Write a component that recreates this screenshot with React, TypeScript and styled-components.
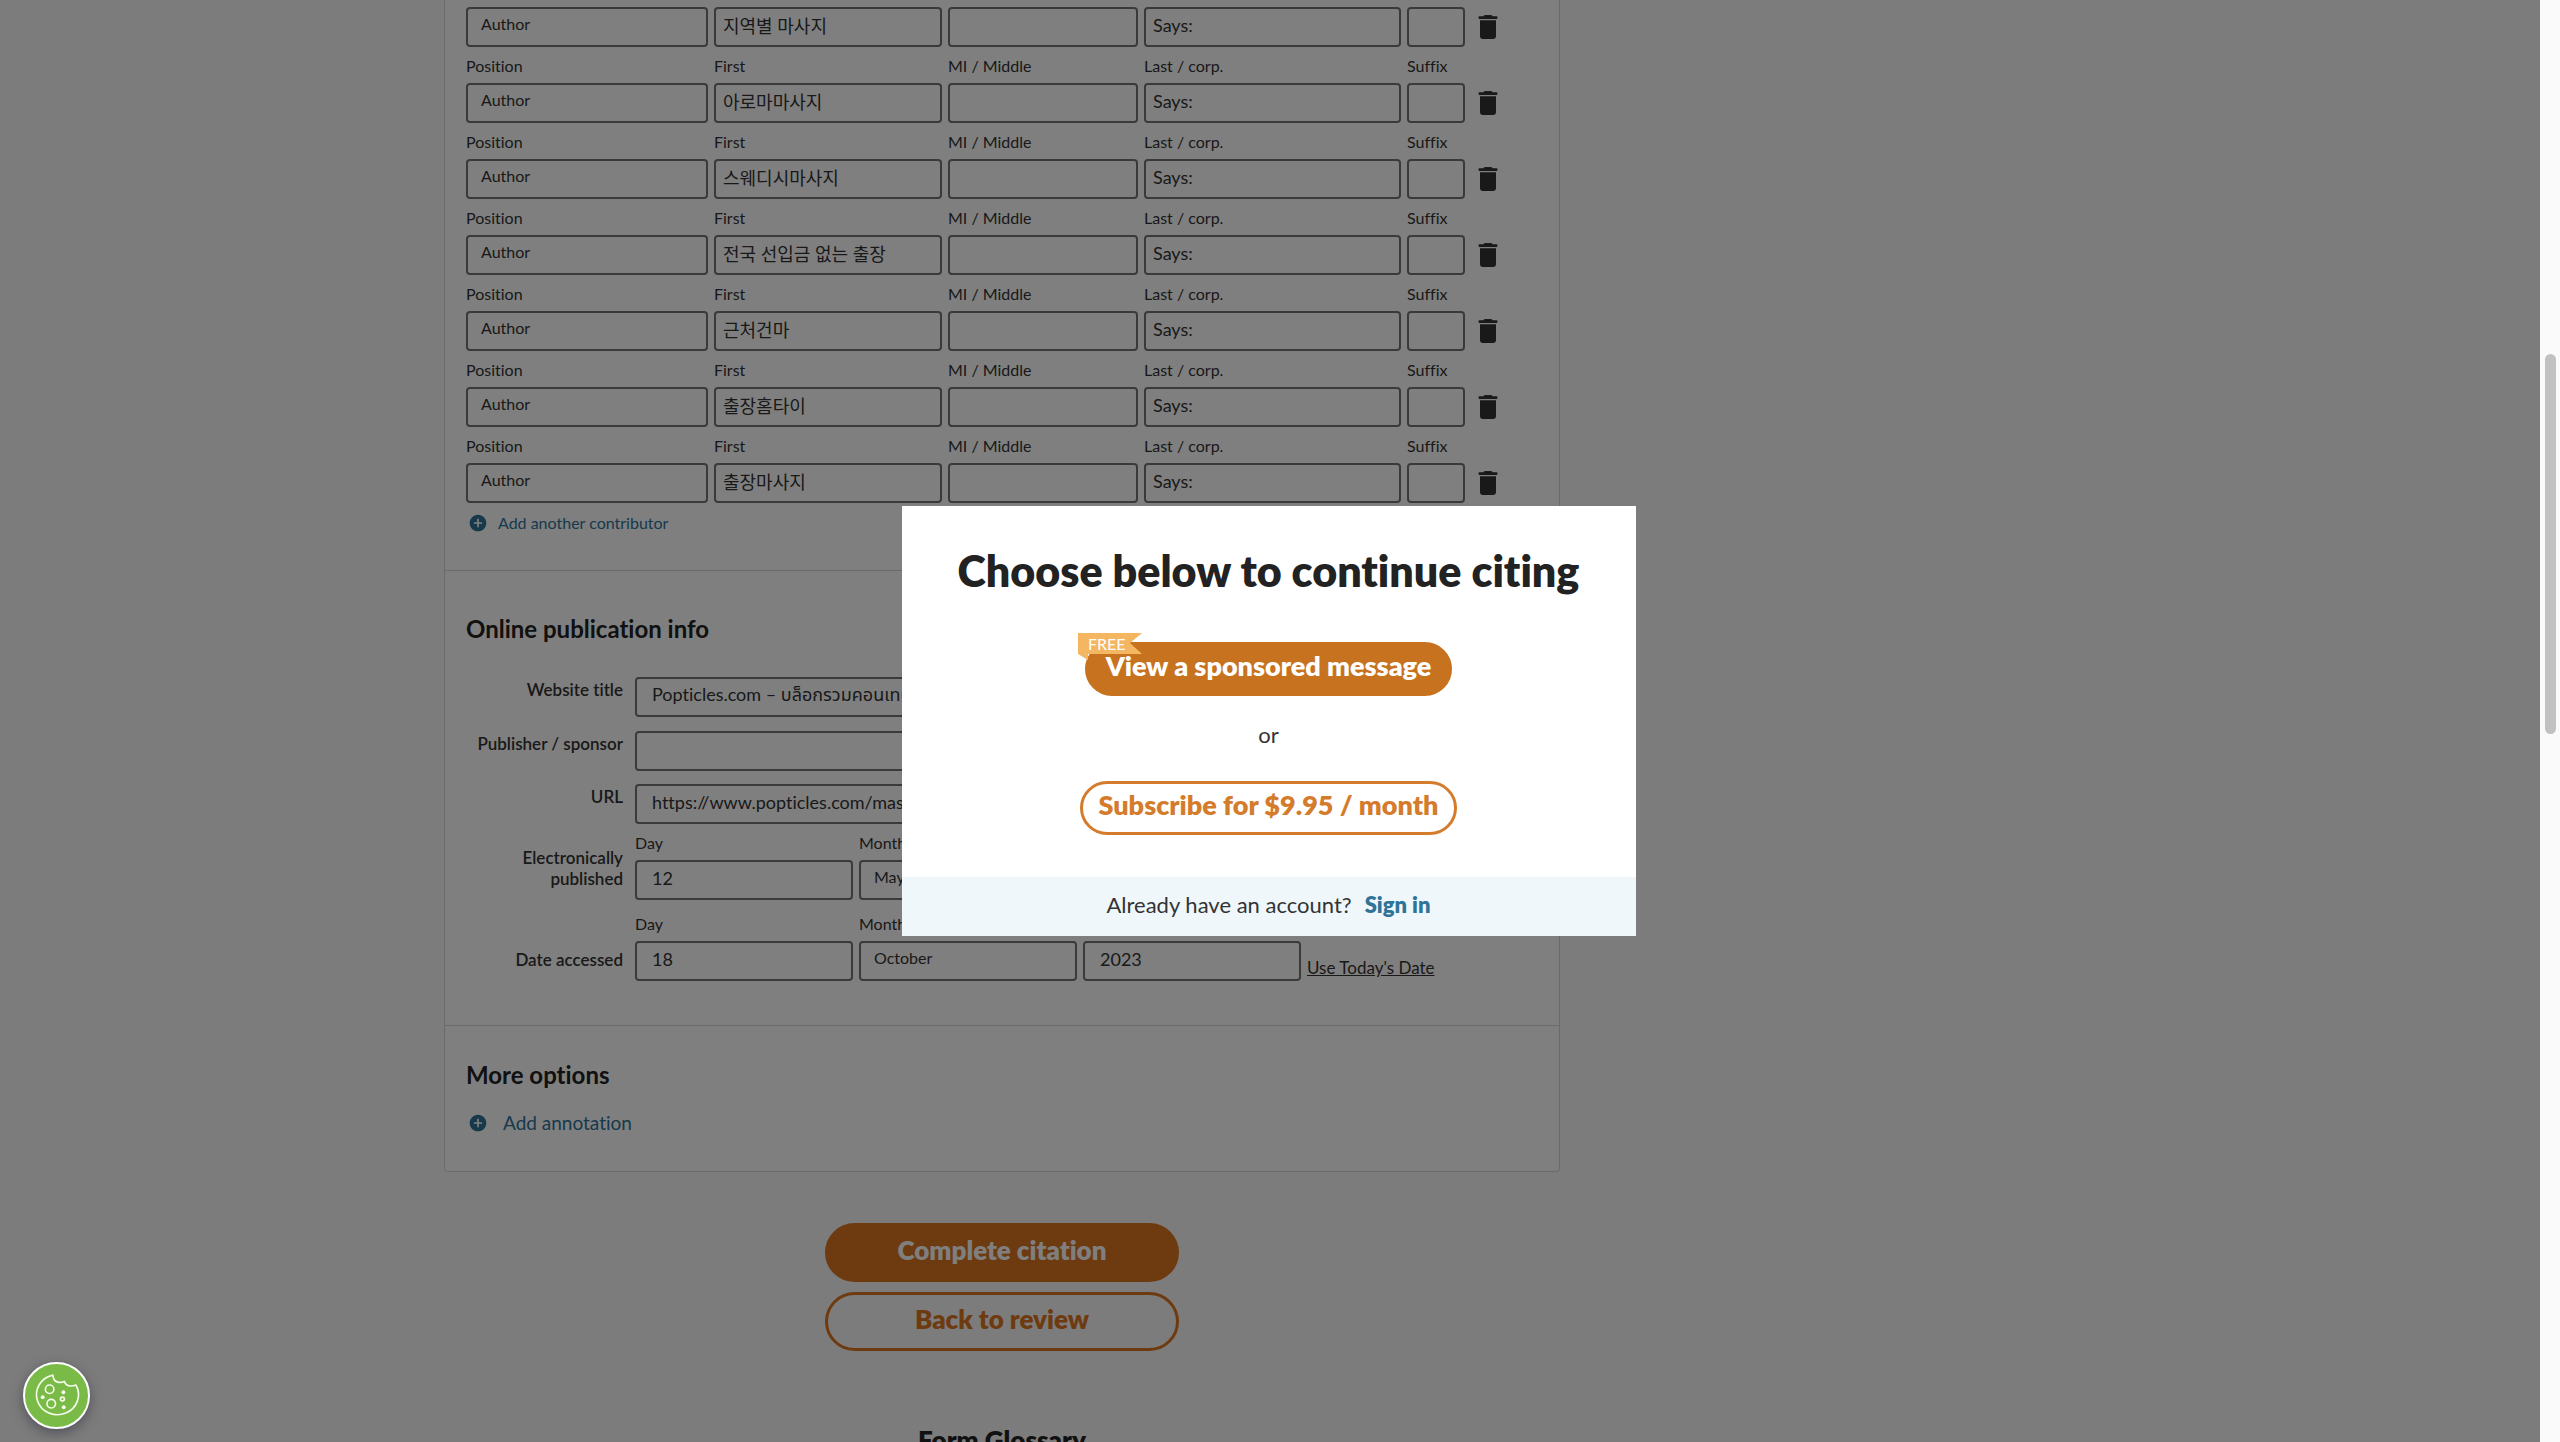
import React, { useId } from "react";
import styled, { createGlobalStyle, css } from "styled-components";
import { MdAddCircle, MdDelete } from "react-icons/md";

const font = `Lato, "Noto Sans CJK KR", "Noto Sans Thai", "Noto Sans", sans-serif`;

const color = {
  page: "#f9f9f9",
  card: "#ffffff",
  line: "#d6d6d6",
  field: "#757575",
  text: "#333333",
  heading: "#222222",
  link: "#2f7399",
  orange: "#dc7520",
  orangeDeep: "#c7721e",
  ribbon: "#f4b660",
};

const GlobalStyle = createGlobalStyle`
  *, *::before, *::after { box-sizing: border-box; }
  body {
    margin: 0;
    background: ${color.page};
    color: ${color.text};
    font-family: ${font};
    font-size: 16px;
    line-height: 20px;
    font-variant-ligatures: none;
  }
  button, input, select {
    font-family: inherit;
    font-variant-ligatures: none;
    color: inherit;
    margin: 0;
  }
`;

const Shell = styled.div`
  display: flex;
  height: 100vh;
  overflow: hidden;
`;

const Viewport = styled.div`
  position: relative;
  flex: 1;
  min-width: 0;
  overflow: hidden;
`;

const ScrollTrack = styled.div`
  flex: none;
  width: 20px;
  padding: 354px 4px 0 5px;
  background: #fafafa;
`;

const ScrollThumb = styled.div`
  height: 380px;
  border-radius: 6px;
  background: #c1c1c1;
`;

const Container = styled.div`
  display: grid;
  grid-template-columns: 1116fr 536fr;
  max-width: 1652px;
  margin: 0 auto;
`;

const Main = styled.main`
  display: flex;
  flex-direction: column;
  align-items: center;
`;

const Card = styled.form`
  width: 100%;
  background: ${color.card};
  border: 1px solid ${color.line};
  border-top: 0;
  border-radius: 0 0 4px 4px;
`;

const Section = styled.section<{ $top: number; $bottom: number }>`
  padding: ${(p) => p.$top}px 21px ${(p) => p.$bottom}px;
  & + & {
    border-top: 1px solid ${color.line};
  }
`;

const SectionTitle = styled.h2<{ $gap: number }>`
  margin: 0 0 ${(p) => p.$gap}px;
  color: ${color.heading};
  font-size: 24px;
  font-weight: 700;
  line-height: 32px;
`;

const ContributorRow = styled.div`
  display: grid;
  grid-template-columns: 242fr 228fr 190fr 257fr 58fr 67fr;
  align-items: end;
  gap: 6px;
`;

const FieldBox = styled.div`
  display: flex;
  flex-direction: column;
  min-width: 0;
`;

const FieldLabel = styled.label`
  padding: 9px 0 7px;
  font-size: 16px;
  line-height: 20px;
`;

const control = css`
  width: 100%;
  min-width: 0;
  height: 40px;
  border: 2px solid ${color.field};
  border-radius: 4px;
  background: transparent;
  outline: none;
`;

const TextInput = styled.input<{ $inset: number }>`
  ${control}
  padding: 0 8px 4px ${(p) => p.$inset}px;
  font-size: 18px;
`;

const SelectInput = styled.select`
  ${control}
  appearance: none;
  padding: 0 14px 8px 13px;
  font-size: 16px;
`;

const IconButton = styled.button`
  display: flex;
  justify-self: start;
  margin-bottom: 4px;
  padding: 0 0 0 1px;
  border: 0;
  background: none;
  color: ${color.text};
  font-size: 32px;
`;

const AddButton = styled.button<{ $size: number; $gap: number }>`
  display: flex;
  align-items: center;
  gap: ${(p) => p.$gap}px;
  padding: 0 0 0 2px;
  border: 0;
  background: none;
  color: ${color.link};
  font-size: ${(p) => p.$size}px;
  line-height: 24px;
  svg {
    width: 20px;
    height: 20px;
  }
`;

const AddRow = styled.div`
  padding-top: 8px;
`;

const FormGrid = styled.div`
  display: grid;
  grid-template-columns: 157fr 903fr;
  column-gap: 12px;
  text-align: right;
`;

const RowLabel = styled.label`
  padding-top: 2px;
  font-size: 17px;
  font-weight: 600;
  line-height: 21px;
`;

const GroupLabel = styled.span`
  align-self: end;
  padding: 0 0 11px 16px;
  font-size: 17px;
  font-weight: 600;
  line-height: 21px;
`;

const RowField = styled.div<{ $gap: number }>`
  margin-bottom: ${(p) => p.$gap}px;
`;

const DateRow = styled.div<{ $top: number }>`
  display: grid;
  grid-template-columns: 218fr 218fr 218fr 231fr;
  gap: 6px;
  align-items: end;
  margin-top: ${(p) => p.$top}px;
  text-align: left;
`;

const TodayLink = styled.a`
  padding-bottom: 3px;
  color: inherit;
  font-size: 17px;
  line-height: 21px;
  text-decoration: underline;
`;

const pill = css`
  display: flex;
  align-items: center;
  justify-content: center;
  padding: 0 0 6px;
  border: 3px solid ${color.orange};
  border-radius: 30px;
  font-weight: 800;
  line-height: 32px;
  white-space: nowrap;
`;

const Actions = styled.div`
  display: flex;
  flex-direction: column;
  gap: 10px;
  width: 354px;
  margin: 51px 0 73px;
`;

const ActionButton = styled.button<{ $filled?: boolean }>`
  ${pill}
  height: 59px;
  font-size: 26px;
  background: ${(p) => (p.$filled ? color.orange : "transparent")};
  color: ${(p) => (p.$filled ? "#ffffff" : color.orange)};
`;

const GlossaryTitle = styled.h2`
  margin: 0;
  color: ${color.heading};
  font-size: 26px;
  font-weight: 800;
  line-height: 32px;
  white-space: nowrap;
`;

const Overlay = styled.div`
  position: absolute;
  inset: 0;
  display: flex;
  align-items: center;
  justify-content: center;
  padding: 0 23px 0 20px;
  background: rgba(0, 0, 0, 0.5);
`;

const Modal = styled.div`
  width: 734px;
  max-width: 100%;
  background: #ffffff;
`;

const ModalBody = styled.div`
  display: flex;
  flex-direction: column;
  align-items: center;
  padding: 39px 20px 42px;
`;

const ModalTitle = styled.h1`
  margin: 0 0 45px;
  color: ${color.heading};
  font-size: 43px;
  font-weight: 800;
  line-height: 52px;
  white-space: nowrap;
`;

const ModalButton = styled.button<{ $filled?: boolean; $width: number }>`
  ${pill}
  position: relative;
  width: ${(p) => p.$width}px;
  height: 54px;
  border-color: ${(p) => (p.$filled ? color.orangeDeep : "#d47c2c")};
  font-size: 27px;
  background: ${(p) => (p.$filled ? color.orangeDeep : "#ffffff")};
  color: ${(p) => (p.$filled ? "#ffffff" : "#d47c2c")};
`;

const Ribbon = styled.span`
  position: absolute;
  top: -12px;
  left: -10px;
  width: 64px;
  height: 27px;
  padding-left: 10px;
  background: ${color.ribbon};
  clip-path: polygon(0 0, 100% 0, 52px 10px, 100% 21px, 10px 21px, 10px 27px, 0 21px);
  color: #ffffff;
  font-size: 16px;
  font-weight: 400;
  line-height: 21px;
  text-align: left;
`;

const OrText = styled.p`
  margin: 25px 0 32px;
  font-size: 22px;
  line-height: 28px;
`;

const ModalFooter = styled.div`
  display: flex;
  justify-content: center;
  gap: 13px;
  padding: 14px 0 17px;
  background: #eff7fb;
  font-size: 22px;
  line-height: 28px;
`;

const SignIn = styled.a`
  color: ${color.link};
  font-weight: 800;
  text-decoration: none;
`;

const CookieButton = styled.button`
  position: absolute;
  left: 23px;
  bottom: 13px;
  width: 67px;
  height: 67px;
  padding: 0;
  border: 2px solid #ffffff;
  border-radius: 50%;
  background: #7abb48;
  box-shadow: 0 4px 12px rgba(40, 40, 60, 0.5);
  svg {
    display: block;
    width: 100%;
    height: 100%;
  }
`;

const contributors = [
  "지역별 마사지",
  "아로마마사지",
  "스웨디시마사지",
  "전국 선입금 없는 출장",
  "근처건마",
  "출장홈타이",
  "출장마사지",
];

type FieldProps = {
  label: string;
  hideLabel?: boolean;
  value?: string;
  select?: boolean;
  inset?: number;
};

function Field({ label, hideLabel, value = "", select, inset = 7 }: FieldProps) {
  const id = useId();
  const name = hideLabel ? label : undefined;
  return (
    <FieldBox>
      {!hideLabel && <FieldLabel htmlFor={id}>{label}</FieldLabel>}
      {select ? (
        <SelectInput id={id} aria-label={name} defaultValue={value}>
          <option>{value}</option>
        </SelectInput>
      ) : (
        <TextInput id={id} aria-label={name} $inset={inset} defaultValue={value} />
      )}
    </FieldBox>
  );
}

function Contributor({ first, hideLabel }: { first: string; hideLabel: boolean }) {
  return (
    <ContributorRow>
      <Field label="Position" value="Author" select hideLabel={hideLabel} />
      <Field label="First" value={first} hideLabel={hideLabel} />
      <Field label="MI / Middle" hideLabel={hideLabel} />
      <Field label="Last / corp." value="Says:" hideLabel={hideLabel} />
      <Field label="Suffix" hideLabel={hideLabel} />
      <IconButton type="button" aria-label="Remove contributor">
        <MdDelete />
      </IconButton>
    </ContributorRow>
  );
}

function TextRow({ label, value, gap }: { label: string; value: string; gap: number }) {
  const id = useId();
  return (
    <>
      <RowLabel htmlFor={id}>{label}</RowLabel>
      <RowField $gap={gap}>
        <TextInput id={id} $inset={15} defaultValue={value} />
      </RowField>
    </>
  );
}

function CookieIcon() {
  return (
    <svg viewBox="72 70 192 192" fill="none" stroke="#f4fbe9" strokeWidth="5" aria-hidden="true">
      <path
        d="M157 104 Q158 124 175 126 Q186 127 192 123 Q197 137 210 137 Q220 137 227 134 A64 61 0 1 1 157 104 Z"
        strokeLinejoin="round"
      />
      <circle cx="147" cy="147" r="13" />
      <circle cx="152" cy="191" r="13" />
      <circle cx="186" cy="177" r="6" />
      <g fill="#f4fbe9" stroke="none">
        <circle cx="189" cy="156" r="6" />
        <circle cx="126" cy="171" r="6" />
        <circle cx="190" cy="202" r="6" />
      </g>
    </svg>
  );
}

export default function App() {
  return (
    <Shell>
      <GlobalStyle />
      <Viewport>
        <Container>
          <Main>
            <Card>
              <Section $top={7} $bottom={35}>
                {contributors.map((first, i) => (
                  <Contributor key={first} first={first} hideLabel={i === 0} />
                ))}
                <AddRow>
                  <AddButton type="button" $size={16} $gap={10}>
                    <MdAddCircle />
                    Add another contributor
                  </AddButton>
                </AddRow>
              </Section>
              <Section $top={42} $bottom={44}>
                <SectionTitle $gap={32}>Online publication info</SectionTitle>
                <FormGrid>
                  <TextRow label="Website title" value="Popticles.com – บล็อกรวมคอนเทนต์" gap={14} />
                  <TextRow label="Publisher / sponsor" value="" gap={13} />
                  <TextRow label="URL" value="https://www.popticles.com/massage" gap={0} />
                  <GroupLabel>Electronically published</GroupLabel>
                  <DateRow $top={0}>
                    <Field label="Day" value="12" inset={15} />
                    <Field label="Month" value="May" select />
                    <Field label="Year" value="2023" inset={15} />
                  </DateRow>
                  <GroupLabel>Date accessed</GroupLabel>
                  <DateRow $top={5}>
                    <Field label="Day" value="18" inset={15} />
                    <Field label="Month" value="October" select />
                    <Field label="Year" value="2023" inset={15} />
                    <TodayLink href="#today">Use Today's Date</TodayLink>
                  </DateRow>
                </FormGrid>
              </Section>
              <Section $top={33} $bottom={36}>
                <SectionTitle $gap={20}>More options</SectionTitle>
                <AddButton type="button" $size={19} $gap={15}>
                  <MdAddCircle />
                  Add annotation
                </AddButton>
              </Section>
            </Card>
            <Actions>
              <ActionButton $filled>Complete citation</ActionButton>
              <ActionButton>Back to review</ActionButton>
            </Actions>
            <GlossaryTitle>Form Glossary</GlossaryTitle>
          </Main>
        </Container>
        <Overlay>
          <Modal role="dialog" aria-modal="true" aria-labelledby="modal-title">
            <ModalBody>
              <ModalTitle id="modal-title">Choose below to continue citing</ModalTitle>
              <ModalButton $filled $width={367}>
                <Ribbon>FREE</Ribbon>
                View a sponsored message
              </ModalButton>
              <OrText>or</OrText>
              <ModalButton $width={377}>Subscribe for $9.95 / month</ModalButton>
            </ModalBody>
            <ModalFooter>
              <span>Already have an account?</span>
              <SignIn href="#signin">Sign in</SignIn>
            </ModalFooter>
          </Modal>
        </Overlay>
        <CookieButton aria-label="Cookie preferences">
          <CookieIcon />
        </CookieButton>
      </Viewport>
      <ScrollTrack>
        <ScrollThumb />
      </ScrollTrack>
    </Shell>
  );
}
